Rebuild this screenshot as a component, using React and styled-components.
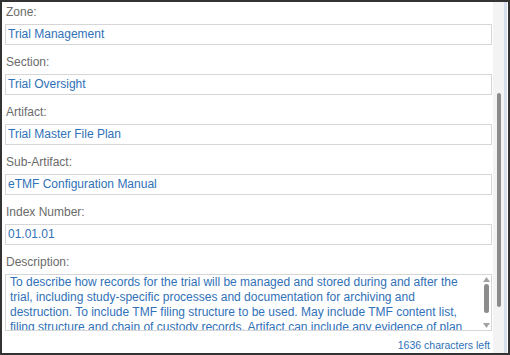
import React from "react";
import styled, { createGlobalStyle } from "styled-components";

const GlobalStyle = createGlobalStyle`
  html, body {
    margin: 0;
    padding: 0;
    background: #ffffff;
  }
  body {
    font-family: "Liberation Sans", Arial, sans-serif;
  }
`;

const fields = [
  { label: "Zone:", value: "Trial Management" },
  { label: "Section:", value: "Trial Oversight" },
  { label: "Artifact:", value: "Trial Master File Plan" },
  { label: "Sub-Artifact:", value: "eTMF Configuration Manual" },
  { label: "Index Number:", value: "01.01.01" },
];

const description =
  "To describe how records for the trial will be managed and stored during and after the trial, including study-specific processes and documentation for archiving and destruction. To include TMF filing structure to be used. May include TMF content list, filing structure and chain of custody records. Artifact can include any evidence of plan implementation.";

const Frame = styled.div`
  width: 510px;
  height: 355px;
  box-sizing: border-box;
  border: 2px solid #333333;
  display: flex;
  overflow: hidden;
  background: #ffffff;
`;

const Content = styled.div`
  flex: 1;
  min-width: 0;
  padding: 2px 1px 0 3px;
  display: flex;
  flex-direction: column;
  gap: 9px;
`;

const Field = styled.div`
  display: flex;
  flex-direction: column;
  gap: 4px;
`;

const Label = styled.div`
  font-size: 12px;
  line-height: 16px;
  color: #6b6b6b;
  padding-left: 1px;
`;

const Input = styled.div`
  height: 21px;
  box-sizing: border-box;
  border: 1px solid #d6d6d6;
  padding: 0 2px;
  font-size: 12px;
  line-height: 19px;
  color: #3071b8;
  white-space: nowrap;
  overflow: hidden;
`;

const TextBox = styled.div`
  height: 57px;
  box-sizing: border-box;
  border: 1px solid #d6d6d6;
  display: flex;
`;

const TextBody = styled.div`
  flex: 1;
  min-width: 0;
  height: 55px;
  padding: 0 4px;
  font-size: 12px;
  line-height: 15px;
  color: #3071b8;
  overflow: hidden;
`;

const MiniBar = styled.div`
  width: 10px;
  display: flex;
  flex-direction: column;
  align-items: center;
  padding: 2px 0 2px;
`;

const MiniThumb = styled.div`
  width: 5px;
  height: 29px;
  margin-top: 2px;
  border-radius: 3px;
  background: #8c8c8c;
`;

const Spacer = styled.div`
  flex: 1;
`;

const Counter = styled.div`
  margin-top: 3px;
  padding-right: 2px;
  text-align: right;
  font-size: 10.5px;
  line-height: 14px;
  color: #3071b8;
`;

const Track = styled.div`
  width: 11px;
  background: #f3f3f3;
  display: flex;
  justify-content: center;
  padding-top: 91px;
`;

const Thumb = styled.div`
  width: 4px;
  height: 214px;
  border-radius: 2px;
  background: #8b8b8b;
`;

const Edge = styled.div`
  width: 3px;
  background: #d6dfeb;
  margin-right: 1px;
`;

const Arrow = ({ down }) => (
  <svg width="7" height="5" viewBox="0 0 7 5">
    <path d={down ? "M0 0h7L3.5 5z" : "M0 5h7L3.5 0z"} fill="#a3a3a3" />
  </svg>
);

export default function App() {
  return (
    <>
      <GlobalStyle />
      <Frame>
        <Content>
          {fields.map((f) => (
            <Field key={f.label}>
              <Label>{f.label}</Label>
              <Input>{f.value}</Input>
            </Field>
          ))}
          <Field>
            <Label>Description:</Label>
            <TextBox>
              <TextBody>{description}</TextBody>
              <MiniBar>
                <Arrow />
                <MiniThumb />
                <Spacer />
                <Arrow down />
              </MiniBar>
            </TextBox>
            <Counter>1636 characters left</Counter>
          </Field>
        </Content>
        <Track>
          <Thumb />
        </Track>
        <Edge />
      </Frame>
    </>
  );
}
